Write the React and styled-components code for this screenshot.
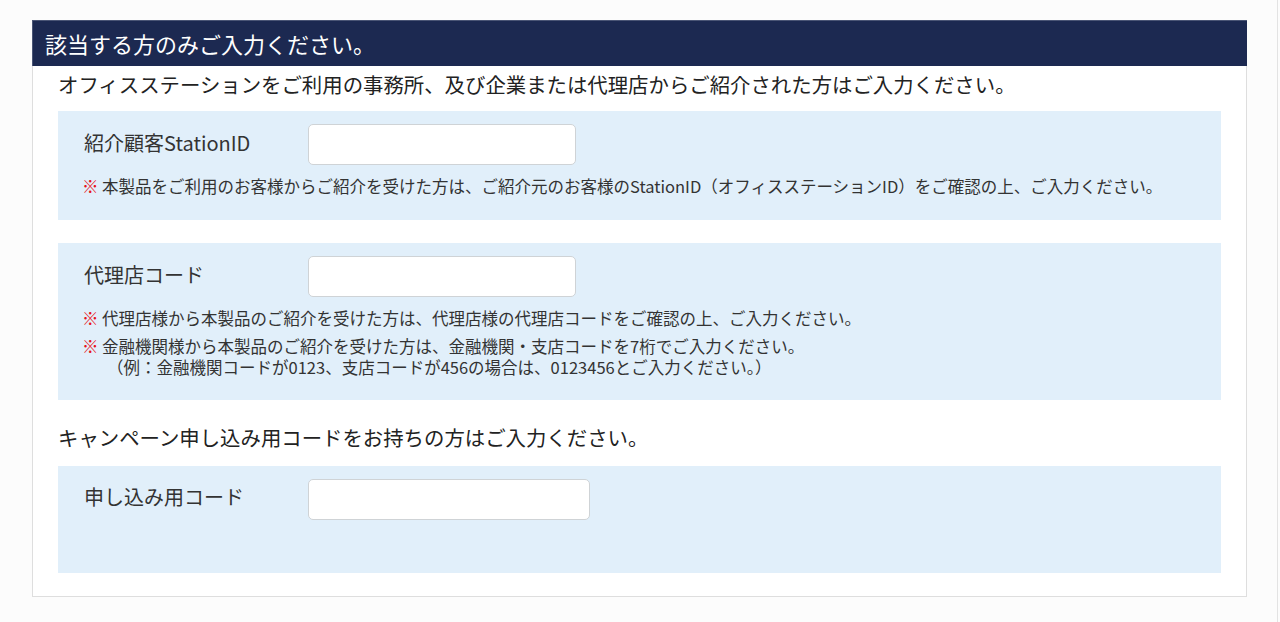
import React from "react";
import styled, { createGlobalStyle } from "styled-components";

const GlobalStyle = createGlobalStyle`
  body {
    margin: 0;
    background: #fcfcfc;
    font-family: "Noto Sans CJK JP", "Noto Sans", sans-serif;
    color: #333;
  }
`;

const Page = styled.div`
  width: 1278px;
  min-height: 622px;
  box-sizing: border-box;
  border-right: 1px solid #e3e3e3;
  padding: 20px 0 0 32px;
`;

const Section = styled.section`
  width: 1215px;
`;

const SectionHeader = styled.h2`
  margin: 0;
  height: 46px;
  box-sizing: border-box;
  padding: 0 12px 2px;
  display: flex;
  align-items: center;
  background: #1c2951;
  border-top: 1px solid #4a5575;
  border-left: 1px solid #4a5575;
  color: #fff;
  font-size: 22px;
  font-weight: 400;
`;

const SectionBody = styled.div`
  background: #fff;
  border: 1px solid #dedede;
  border-top: none;
  padding: 2px 25px 23px;
`;

const Lead = styled.p`
  margin: ${(p) => p.$top || 0}px 0 ${(p) => p.$gap}px;
  font-size: 20.4px;
  line-height: 32px;
  color: #222;
`;

const Panel = styled.div`
  background: #e1effa;
  padding: 13px 26px ${(p) => p.$bottom}px;
  margin-bottom: ${(p) => p.$mb || 0}px;
`;

const Row = styled.div`
  display: flex;
  align-items: center;
  height: 41px;
`;

const Label = styled.label`
  width: 224px;
  flex-shrink: 0;
  font-size: 20px;
  line-height: 28px;
  color: #333;
  margin-top: ${(p) => (p.$up ? -6 : -3)}px;
`;

const Input = styled.input`
  width: ${(p) => p.$w}px;
  height: 41px;
  box-sizing: border-box;
  border: 1px solid #cfd3d6;
  border-radius: 5px;
  background: #fff;
  font-size: 16px;
  padding: 0 10px;
  outline: none;
`;

const Notes = styled.div`
  margin-top: 11px;
  display: flex;
  flex-direction: column;
  gap: 7px;
`;

const Note = styled.div`
  margin-left: -2px;
  font-size: 16.5px;
  line-height: 21px;
  color: #333;
  display: flex;
`;

const NoteText = styled.div`
  display: flex;
  flex-direction: column;
`;

const SubLine = styled.span`
  padding-left: 5px;
`;

const Mark = styled.span`
  color: #e8141b;
  font-weight: 700;
  flex-shrink: 0;
  width: 20px;
`;

function NoteLine({ children, sub }) {
  return (
    <Note>
      <Mark>※</Mark>
      <NoteText>
        <span>{children}</span>
        {sub && <SubLine>{sub}</SubLine>}
      </NoteText>
    </Note>
  );
}

export default function App() {
  return (
    <>
      <GlobalStyle />
      <Page>
        <Section>
          <SectionHeader>該当する方のみご入力ください。</SectionHeader>
          <SectionBody>
            <Lead $gap={11}>
              オフィスステーションをご利用の事務所、及び企業または代理店からご紹介された方はご入力ください。
            </Lead>

            <Panel $bottom={23} $mb={23}>
              <Row>
                <Label>紹介顧客StationID</Label>
                <Input $w={268} />
              </Row>
              <Notes>
                <NoteLine>
                  本製品をご利用のお客様からご紹介を受けた方は、ご紹介元のお客様のStationID（オフィスステーションID）をご確認の上、ご入力ください。
                </NoteLine>
              </Notes>
            </Panel>

            <Panel $bottom={22}>
              <Row>
                <Label>代理店コード</Label>
                <Input $w={268} />
              </Row>
              <Notes>
                <NoteLine>
                  代理店様から本製品のご紹介を受けた方は、代理店様の代理店コードをご確認の上、ご入力ください。
                </NoteLine>
                <NoteLine sub="（例：金融機関コードが0123、支店コードが456の場合は、0123456とご入力ください。）">
                  金融機関様から本製品のご紹介を受けた方は、金融機関・支店コードを7桁でご入力ください。
                </NoteLine>
              </Notes>
            </Panel>

            <Lead $top={21} $gap={13}>
              キャンペーン申し込み用コードをお持ちの方はご入力ください。
            </Lead>

            <Panel $bottom={53}>
              <Row>
                <Label $up>申し込み用コード</Label>
                <Input $w={282} />
              </Row>
            </Panel>
          </SectionBody>
        </Section>
      </Page>
    </>
  );
}
